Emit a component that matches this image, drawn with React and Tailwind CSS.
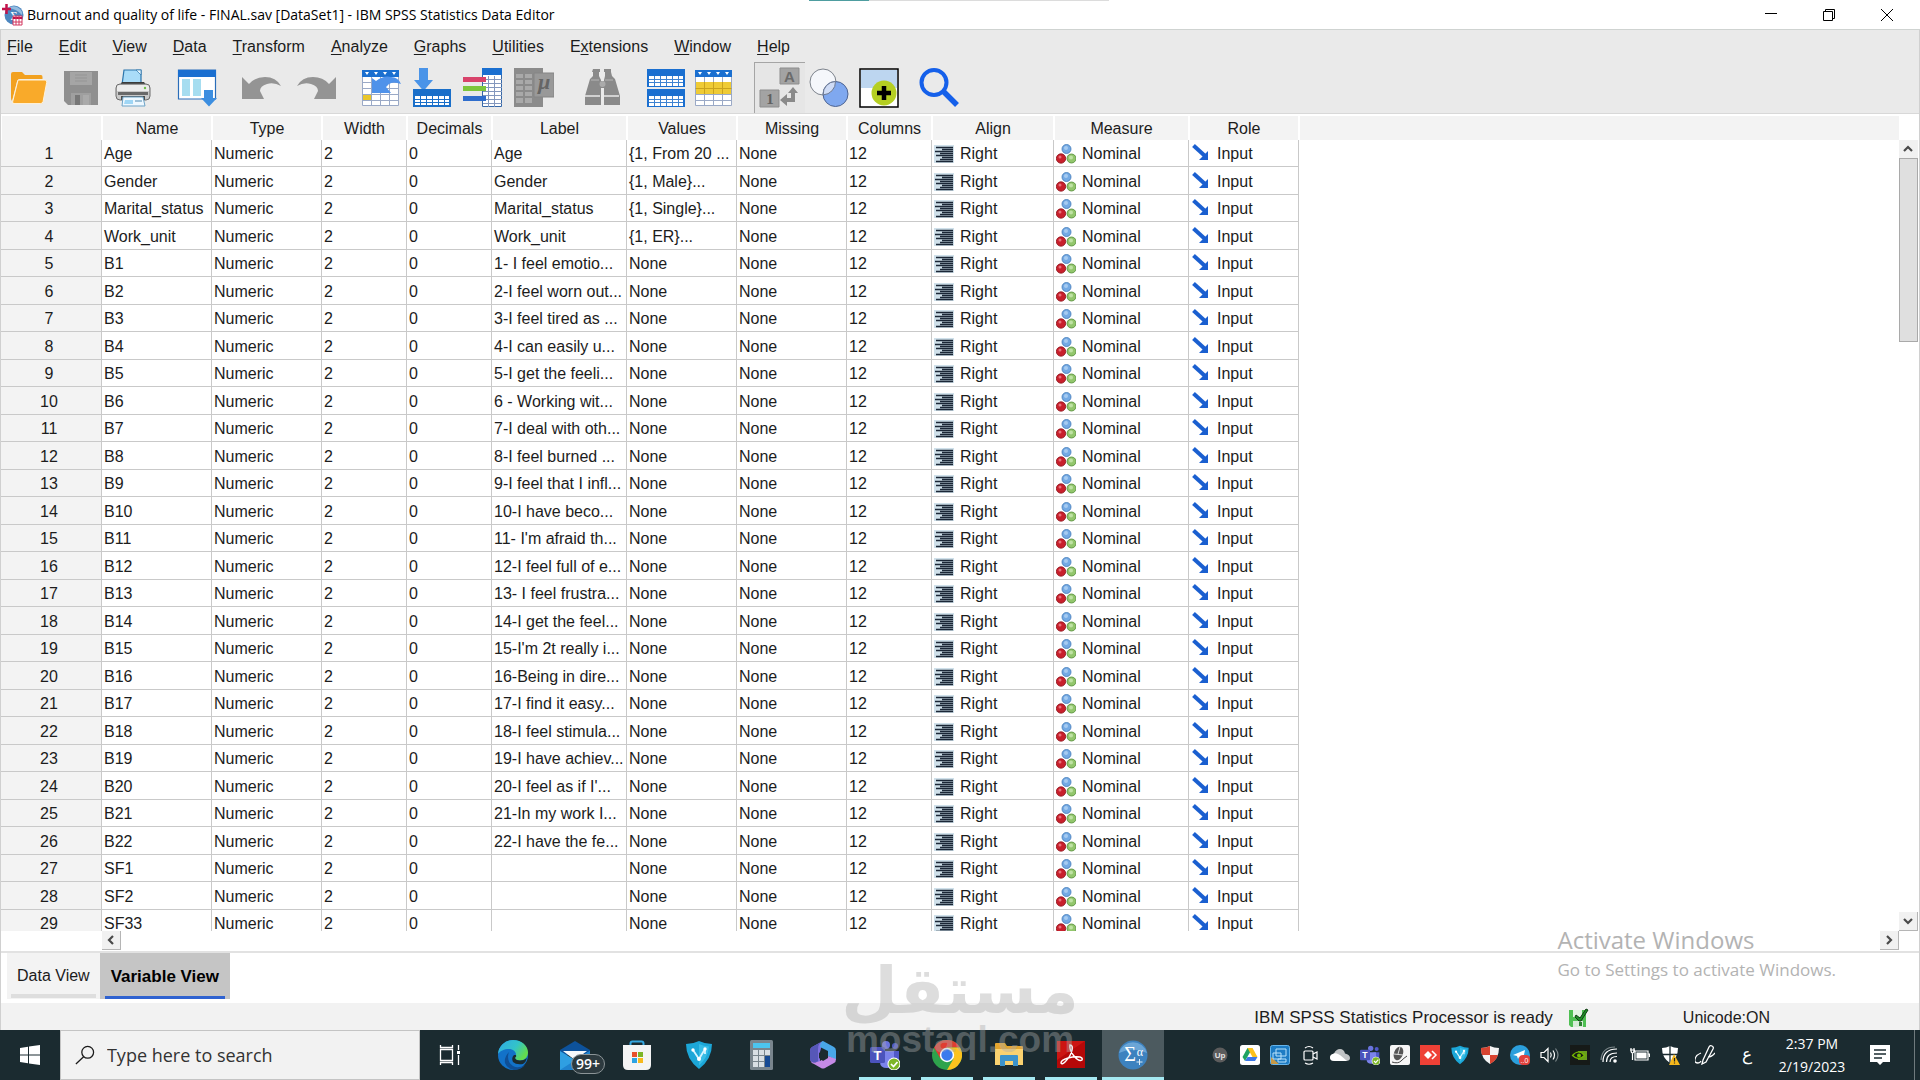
import React, { useState } from 'react';

const MENUS = [
  ['', 'F', 'ile'],
  ['', 'E', 'dit'],
  ['', 'V', 'iew'],
  ['', 'D', 'ata'],
  ['', 'T', 'ransform'],
  ['', 'A', 'nalyze'],
  ['', 'G', 'raphs'],
  ['', 'U', 'tilities'],
  ['E', 'x', 'tensions'],
  ['', 'W', 'indow'],
  ['', 'H', 'elp'],
];

const COLUMNS = [
  { label: '', width: 'w-[101px]' },
  { label: 'Name', width: 'w-[110px]' },
  { label: 'Type', width: 'w-[110px]' },
  { label: 'Width', width: 'w-[85px]' },
  { label: 'Decimals', width: 'w-[85px]' },
  { label: 'Label', width: 'w-[135px]' },
  { label: 'Values', width: 'w-[110px]' },
  { label: 'Missing', width: 'w-[110px]' },
  { label: 'Columns', width: 'w-[85px]' },
  { label: 'Align', width: 'w-[122px]' },
  { label: 'Measure', width: 'w-[135px]' },
  { label: 'Role', width: 'w-[110px]' },
];

const VARIABLES = [
  { name: 'Age', label: 'Age', values: '{1, From 20 ...' },
  { name: 'Gender', label: 'Gender', values: '{1, Male}...' },
  { name: 'Marital_status', label: 'Marital_status', values: '{1, Single}...' },
  { name: 'Work_unit', label: 'Work_unit', values: '{1, ER}...' },
  { name: 'B1', label: '1- I feel emotio...' },
  { name: 'B2', label: '2-I feel worn out...' },
  { name: 'B3', label: '3-I feel tired as ...' },
  { name: 'B4', label: '4-I can easily u...' },
  { name: 'B5', label: '5-I get the feeli...' },
  { name: 'B6', label: '6 - Working wit...' },
  { name: 'B7', label: '7-I deal with oth...' },
  { name: 'B8', label: '8-I feel burned ...' },
  { name: 'B9', label: '9-I feel that I infl...' },
  { name: 'B10', label: '10-I have beco...' },
  { name: 'B11', label: "11- I'm afraid th..." },
  { name: 'B12', label: '12-I feel full of e...' },
  { name: 'B13', label: '13- I feel frustra...' },
  { name: 'B14', label: '14-I get the feel...' },
  { name: 'B15', label: "15-I'm 2t really i..." },
  { name: 'B16', label: '16-Being in dire...' },
  { name: 'B17', label: '17-I find it easy...' },
  { name: 'B18', label: '18-I feel stimula...' },
  { name: 'B19', label: '19-I have achiev...' },
  { name: 'B20', label: "20-I feel as if I'..." },
  { name: 'B21', label: '21-In my work I...' },
  { name: 'B22', label: '22-I have the fe...' },
  { name: 'SF1', label: '' },
  { name: 'SF2', label: '' },
  { name: 'SF33', label: '' },
];

/* ---------- toolbar icons, all on a 40x40 box ---------- */

const OpenIcon = () => (
  <svg viewBox="0 0 40 40" className="w-10 h-10">
    <path d="M2 6q0-2 2-2h9l3 3h16q1.500 0 1.500 2v2H11q-2.500 0-3 2.500L3 33q-1-1-1-3z" fill="#f2a11f" />
    <path d="M9 12h27q2.200 0 1.700 2.400l-3.600 19q-.5 2.200-2.700 2.200H5q-1.800 0-1.300-2z" fill="#f9aa2a" stroke="#fff3dc" strokeWidth="1" />
  </svg>
);

const SaveIcon = () => (
  <svg viewBox="0 0 40 40" className="w-10 h-10">
    <path d="M3 3h34v34H7l-4-4z" fill="#8f8f8f" />
    <path d="M9 4h22v13H9z" fill="#a5a5a5" />
    <path d="M14 7h12M14 10h12M14 13h12" stroke="#959595" />
    <path d="M10 25h20v12H10z" fill="#9f9f9f" />
    <path d="M14 27h5v10h-5z" fill="#777" />
    <path d="M22 27h6v10h-6z" fill="#aaa" />
  </svg>
);

const PrintIcon = () => (
  <svg viewBox="0 0 40 40" className="w-10 h-10">
    <path d="M11 2h17v15H9z" fill="#a9dcf8" stroke="#2b75ac" strokeWidth="1.200" />
    <path d="M23 2h5v5z" fill="#e8f7ff" stroke="#2b75ac" strokeWidth=".7" />
    <path d="M9 14h22l2 3H7z" fill="#3b3b3b" />
    <rect x="3" y="16" width="34" height="16" rx="4" fill="#c9c9c9" stroke="#6b6b6b" />
    <path d="M4 19q0-2 3-2h26q3 0 3 2v4H4z" fill="#ececec" />
    <path d="M5 24h30v3H5z" fill="#696969" />
    <circle cx="32" cy="20" r="1.200" fill="#6fbf4b" />
    <path d="M8 28h24v4H8z" fill="#4d4d4d" />
    <path d="M10 29h20l2 9H9z" fill="#eef8ff" stroke="#6ca3c7" />
    <path d="M12 32h8v4h-9z" fill="#9fd6f5" />
    <path d="M22 33h7" stroke="#4d88b0" />
  </svg>
);

const DialogIcon = () => (
  <svg viewBox="0 0 40 40" className="w-10 h-10">
    <path d="M1.500 2h37v29h-37z" fill="#fff" stroke="#2a6db9" strokeWidth="1.200" />
    <path d="M1 2h38v7H1z" fill="#1a6fd0" />
    <path d="M5 11h8v17H5zM16 11h8v17h-8z" fill="#a6ddf0" />
    <path d="M27 22h9v8h4l-8 8.500-8-8.500h3z" fill="#3c8ee0" />
  </svg>
);

const UndoIcon = ({ flip }) => (
  <svg viewBox="0 0 40 40" className={flip ? 'w-10 h-10 -scale-x-100' : 'w-10 h-10'}>
    <path d="M1 9l7 7q6-7 16-7 11 0 16 9-7-4-14-2-7 2-7 7l4 8H1z" fill="#949494" />
  </svg>
);

const GridBase = () => (
  <>
    <path d="M1.500 2.500h36v35h-36z" fill="#fff" stroke="#9aa9c6" />
    <path d="M1.500 14.500h36M1.500 20.500h36M1.500 26.500h36M1.500 32.500h36M10.500 8v30M19.500 8v30M28.500 8v30" stroke="#9aa9c6" />
    <path d="M1 2h37v7H1z" fill="#1a6fd0" />
    <path d="M4 4h4l-2 3zM13 4h4l-2 3zM22 4h4l-2 3zM31 4h4l-2 3z" fill="#fff" />
  </>
);

const GotoCaseIcon = () => (
  <svg viewBox="0 0 40 40" className="w-10 h-10">
    <GridBase />
    <path d="M2 27h8v5H2z" fill="#e9c62b" />
    <path d="M11 10l4 3q8-6 15-4 7 0 10 7-8-3-12 0l-3 3 5 6H11z" fill="#4f92ea" />
  </svg>
);

const GotoVariableIcon = () => (
  <svg viewBox="0 0 40 40" className="w-10 h-10">
    <path d="M7 0h9v12h5l-9.500 11L2 12h5z" fill="#4a94e8" />
    <path d="M1 21h38v18H1z" fill="#1a6fc9" />
    <g fill="#fff">
      <path d="M3 28h5v3H3zM9 28h5v3H9zM15 28h5v3h-5zM21 28h5v3h-5zM27 28h5v3h-5zM33 28h4v3h-4z" />
      <path d="M3 32h5v2H3zM9 32h5v2H9zM15 32h5v2h-5zM21 32h5v2h-5zM27 32h5v2h-5zM33 32h4v2h-4z" />
      <path d="M3 35h5v2H3zM9 35h5v2H9zM15 35h5v2h-5zM21 35h5v2h-5zM27 35h5v2h-5zM33 35h4v2h-4z" />
    </g>
  </svg>
);

const VariablesIcon = () => (
  <svg viewBox="0 0 40 40" className="w-10 h-10">
    <path d="M19.500 1.500h19v37h-19z" fill="#fff" stroke="#3668a8" />
    <path d="M20 11.500h19M20 15.500h19M20 19.500h19M20 23.500h19M20 27.500h19M20 31.500h19M20 35.500h19M25.500 8v31M31.500 8v31" stroke="#8397bd" />
    <path d="M19 0h20v7H19z" fill="#1a6fd0" />
    <path d="M0 9h23v5H0z" fill="#d8436b" />
    <path d="M0 18h23v5H0z" fill="#7cc63c" />
    <path d="M0 28h23v5H0z" fill="#2f6dcc" />
  </svg>
);

const StatsIcon = () => (
  <svg viewBox="0 0 40 40" className="w-10 h-10">
    <path d="M0 0h29v39H0z" fill="#8b8b8b" />
    <g fill="#a9a9a9">
      <path d="M2 6h7v4H2zM11 6h7v4h-7zM20 6h7v4h-7zM2 12h7v4H2zM11 12h7v4h-7z" />
      <path d="M2 18h7v4H2zM11 18h7v4h-7zM2 24h7v4H2zM11 24h7v4h-7zM2 30h7v5H2zM11 30h7v5h-7z" />
    </g>
    <path d="M20 5h20v24H20z" fill="#999" stroke="#858585" />
    <text x="30" y="21" textAnchor="middle" fontFamily="Liberation Serif" fontStyle="italic" fontWeight="bold" fontSize="22" fill="#656565">µ</text>
  </svg>
);

const FindIcon = () => (
  <svg viewBox="0 0 40 40" className="w-10 h-10" fill="#8a8a8a">
    <path d="M11 1h7v3h-1v4l2 4v25H3V28l5-17 3-3V4h-1z" />
    <path d="M22 1h7v3l1 4 3 3 5 17v9H22V12l1-4V4h-1z" />
    <path d="M17 13h7v7h-7z" />
    <path d="M3 28h15M22 28h15" stroke="#e9e9e9" strokeWidth="1.500" />
    <path d="M9 12h8M23 12h8" stroke="#b5b5b5" />
    <circle cx="20.500" cy="16" r="3" fill="#aaa" />
  </svg>
);

const SplitIcon = () => (
  <svg viewBox="0 0 40 40" className="w-10 h-10">
    <path d="M1 1h38v18H1zM1 21h38v18H1z" fill="#1a6fd0" />
    <path d="M3 8h34v10H3zM3 28h34v10H3z" fill="#fff" />
    <path d="M3 11.500h34M3 14.500h34M3 31.500h34M3 34.500h34M8.500 8v10M14.500 8v10M20.500 8v10M26.500 8v10M32.500 8v10M8.500 28v10M14.500 28v10M20.500 28v10M26.500 28v10M32.500 28v10" stroke="#3f83d1" />
  </svg>
);

const SelectCasesIcon = () => (
  <svg viewBox="0 0 40 40" className="w-10 h-10">
    <GridBase />
    <path d="M2 14h35v12H2z" fill="#efcb35" />
    <path d="M1.500 20.500h36M10.500 14v12M19.500 14v12M28.500 14v12" stroke="#c9a21c" />
  </svg>
);

const ValueLabelsIcon = () => (
  <svg viewBox="0 0 50 50" className="w-[50px] h-[50px]">
    <path d="M25 5h19v16H25zM5 27h19v17H5z" fill="#a3a3a3" stroke="#8d8d8d" />
    <text x="34.500" y="19" textAnchor="middle" fontFamily="Liberation Sans" fontWeight="bold" fontSize="15" fill="#6b6b6b">A</text>
    <text x="15" y="41" textAnchor="middle" fontFamily="Liberation Serif" fontWeight="bold" fontSize="15" fill="#606060">1</text>
    <path d="M38 24l5 6h-3v9h-8v4l-7-6 7-6v4h4v-5h-3z" fill="#8a8a8a" />
  </svg>
);

const SetsIcon = () => (
  <svg viewBox="0 0 40 40" className="w-10 h-10">
    <circle cx="14" cy="14" r="13" fill="#f5f7fb" stroke="#7d838c" />
    <circle cx="26.500" cy="26" r="12.500" fill="#7fa8ef" stroke="#4d6391" />
    <path d="M26.500 13.500a12.500 12.500 0 0 0-12.300 13.400A13 13 0 0 0 26.500 13.500z" fill="#cfdcf6" stroke="#6a7790" />
  </svg>
);

const AddIcon = () => (
  <svg viewBox="0 0 40 40" className="w-10 h-10">
    <path d="M1 1h38v38H1z" fill="#fff" stroke="#000" strokeWidth="1.500" />
    <path d="M2 2h36v18H2z" fill="#bdd6f0" />
    <circle cx="25" cy="25" r="12.500" fill="#b5cf22" />
    <path d="M25 18v14M18 25h14" stroke="#000" strokeWidth="4.500" />
  </svg>
);

const SearchIcon = () => (
  <svg viewBox="0 0 40 40" className="w-10 h-10" fill="none" stroke="#1560ea">
    <circle cx="15" cy="14.500" r="12.500" strokeWidth="4" />
    <path d="M24 23l14 14" strokeWidth="5.500" />
  </svg>
);

const TOOL_GROUPS = [
  { className: 'gap-3', items: [['Open', OpenIcon], ['Save', SaveIcon], ['Print', PrintIcon]] },
  { className: 'ml-6', items: [['Recall dialogs', DialogIcon]] },
  { className: 'ml-6 gap-4', items: [['Undo', UndoIcon], ['Redo', () => <UndoIcon flip />]] },
  { className: 'ml-6 gap-[11px]', items: [['Go to case', GotoCaseIcon], ['Go to variable', GotoVariableIcon], ['Variables', VariablesIcon], ['Descriptives', StatsIcon]] },
  { className: 'ml-7', items: [['Find', FindIcon]] },
  { className: 'ml-6 gap-2', items: [['Split file', SplitIcon], ['Select cases', SelectCasesIcon]] },
];

/* ---------- cell icons ---------- */

const AlignIcon = () => (
  <svg viewBox="0 0 20 20" className="w-5 h-5 shrink-0">
    <path d="M0 1h20v18H0z" fill="#cfe0ea" />
    <path d="M2 3.500h17M8 5.500h11M1 7.500h18M6 9.500h13M2 11.500h17M8 13.500h11M6 15.500h13M2 17.500h17" stroke="#1b2737" strokeWidth="1.400" />
  </svg>
);

const NominalIcon = () => (
  <svg viewBox="0 0 20 20" className="w-5 h-5 shrink-0">
    <circle cx="10.500" cy="5" r="4.500" fill="#74aae4" stroke="#3f78b8" strokeWidth=".8" />
    <circle cx="10" cy="4" r="2" fill="#a6cbf1" />
    <circle cx="5" cy="14.500" r="4.700" fill="#c8202c" stroke="#8d1019" strokeWidth=".8" />
    <circle cx="4" cy="13" r="1.500" fill="#e8707a" />
    <circle cx="15.500" cy="14.500" r="4.500" fill="#92c66c" stroke="#4f8a33" strokeWidth=".8" />
    <circle cx="15" cy="13.500" r="2" fill="#bfe2a4" />
  </svg>
);

const InputIcon = () => (
  <svg viewBox="0 0 20 20" className="w-5 h-5 shrink-0">
    <path d="M2.500 1.500L14 12" stroke="#1a5fd0" strokeWidth="4" />
    <path d="M17 7v9H8z" fill="#1a5fd0" />
  </svg>
);

const Chevron = ({ d }) => (
  <svg viewBox="0 0 18 18" className="w-[18px] h-[18px]" fill="none" stroke="#4a4a4a" strokeWidth="2.200">
    <path d={d} />
  </svg>
);

/* ---------- taskbar icons, 30x30 ---------- */

const TaskViewIcon = () => (
  <svg viewBox="0 0 30 30" className="w-[30px] h-[30px]" fill="none" stroke="#fff" strokeWidth="1.300">
    <path d="M4.500 9.500h12v11h-12zM4.500 5v2.500h12V5M4.500 25v-2.500h12V25M22.500 5v5M22.500 15v10" />
    <path d="M21 11h3v3h-3z" fill="#fff" stroke="none" />
  </svg>
);

const EdgeIcon = () => (
  <svg viewBox="0 0 30 30" className="w-[30px] h-[30px]">
    <defs>
      <linearGradient id="edgeTop" x1="0" y1="0" x2="1" y2=".5">
        <stop offset="0" stopColor="#2fa9e6" />
        <stop offset=".6" stopColor="#33c3c9" />
        <stop offset="1" stopColor="#63dc4e" />
      </linearGradient>
    </defs>
    <circle cx="15" cy="15" r="15" fill="#1272c9" />
    <path d="M0 14A15 15 0 0 1 15 0c9 0 15 6 15 12.500 0 5-4 8-8 8-3 0-5-1-5-2.500 0-1 1-1.500 1-3.500 0-3-3-5.500-7-5.500-5 0-9 2-11 5z" fill="url(#edgeTop)" />
    <path d="M10 17q0 6 5 9t12-1q-4 5-11 5-7-1-9-7-1-6 4-11-1 2-1 5z" fill="#0f4f96" />
    <path d="M17 18q1 2.500 5 2.500 4 0 7-2.500-1 4-4 6-7 1-10-2-2-4 1-7h2q1 1-1 3z" fill="#1b2b30" />
  </svg>
);

const MailIcon = () => (
  <span className="relative block w-[30px] h-[30px]">
    <svg viewBox="0 0 30 30" className="w-[30px] h-[30px]">
      <path d="M0 10L15 1l15 9v5H0z" fill="#0d529b" />
      <path d="M3 11h24l-12 9z" fill="#f5f8fb" />
      <path d="M0 11l15 9 15-9v19H0z" fill="#2f9fe2" />
      <path d="M0 30l17-11 13-8v19z" fill="#1f83cf" />
    </svg>
    <span className="absolute left-[11px] top-[14px] rounded-full border border-[#8b9497] bg-[#2d3a3f] px-1 text-[14px] leading-[18px] font-semibold text-white font-['Open_Sans',sans-serif]">99+</span>
  </span>
);

const StoreIcon = () => (
  <svg viewBox="0 0 30 30" className="w-[30px] h-[30px]">
    <path d="M8.500 7V3.500q0-2 2-2h9q2 0 2 2V7" fill="none" stroke="#35a7e0" strokeWidth="2" />
    <path d="M1 5h28v20q0 5-5 5H6q-5 0-5-5z" fill="#f4f4f4" />
    <path d="M10 12h5v5h-5z" fill="#e8502c" />
    <path d="M16 12h5v5h-5z" fill="#7cb527" />
    <path d="M10 18h5v5h-5z" fill="#2ba3e3" />
    <path d="M16 18h5v5h-5z" fill="#f7b91c" />
  </svg>
);

const VShieldIcon = ({ className = 'w-[30px] h-[30px]' }) => (
  <svg viewBox="0 0 30 30" className={className}>
    <path d="M15 1q6 3 13 3 0 15-13 25Q2 19 2 4q7 0 13-3z" fill="#1ca7d8" />
    <path d="M15 4q5 2 10 2.500-1 11-10 19z" fill="#38bde6" />
    <path d="M9 10l6 9 6-10M21 9v5" fill="none" stroke="#d5f4ff" strokeWidth="1.800" />
    <circle cx="9" cy="10" r="1.700" fill="#fff" />
    <circle cx="21" cy="9" r="1.700" fill="#fff" />
    <circle cx="15" cy="19" r="2" fill="#fff" />
  </svg>
);

const CalcIcon = () => (
  <svg viewBox="0 0 30 30" className="w-[30px] h-[30px]">
    <rect x="4" y="0" width="23" height="30" rx="1.500" fill="#79858d" />
    <path d="M7 3h17v5H7z" fill="#4cc5ee" />
    <path d="M7 10h5v5H7zM13 10h5v5h-5zM19 10h5v5h-5zM7 16h5v5H7zM13 16h5v5h-5zM7 22h5v5H7zM13 22h5v5h-5z" fill="#d9dfe4" />
    <path d="M19 16h5v11h-5z" fill="#164a94" />
  </svg>
);

const M365Icon = () => (
  <svg viewBox="0 0 30 30" className="w-[30px] h-[30px]">
    <path d="M15 1L4 7q-2 1-2 4v9l10 4V12z" fill="#7f6fe0" />
    <path d="M15 1l11 6q2 1 2 4v9l-8-4v-5l-8-4q0-5 3-6z" fill="#49a7e8" />
    <path d="M2 20q1 3 4 4l7 4q2 1 4 0l9-5q2-1 2-4l-8-3-8 5q-6 3-10-1z" fill="#c58ae6" />
    <path d="M2 11q0-3 2-4l8-4.500Q10 5 10 10v11q-5 4-8-1z" fill="#5657b8" />
    <path d="M15 10l5 3v5l-5 3-4-3v-5z" fill="#1b2b30" />
  </svg>
);

const TeamsIcon = ({ className = 'w-[30px] h-[30px]' }) => (
  <svg viewBox="0 0 30 30" className={className}>
    <circle cx="16" cy="5" r="4" fill="#6a74dd" />
    <circle cx="25" cy="6" r="3" fill="#5059c9" />
    <path d="M20 11h9v8q0 5-5 5h-4z" fill="#5059c9" />
    <path d="M10 11h14v11q0 6-7 6t-7-6z" fill="#7b83eb" />
    <rect x="0" y="7" width="15" height="16" rx="1.500" fill="#4b53bc" />
    <text x="7.500" y="20" textAnchor="middle" fontFamily="Liberation Sans" fontWeight="bold" fontSize="13" fill="#fff">T</text>
    <circle cx="24" cy="24" r="6.500" fill="#fff" />
    <circle cx="24" cy="24" r="5.500" fill="#7cb527" />
    <path d="M21 24l2.500 2.500L27.500 22" fill="none" stroke="#fff" strokeWidth="1.700" />
  </svg>
);

const ChromeIcon = () => (
  <svg viewBox="0 0 30 30" className="w-[30px] h-[30px]">
    <circle cx="15" cy="15" r="15" fill="#2ea34c" />
    <path d="M2 7.500A15 15 0 0 1 28 7.500H15L8.500 18.700z" fill="#e03d31" />
    <path d="M28 7.500A15 15 0 0 1 15 30l6.500-11.300L15 7.500z" fill="#fcc31e" />
    <circle cx="15" cy="15" r="7.200" fill="#fff" />
    <circle cx="15" cy="15" r="5.700" fill="#3a7bed" />
  </svg>
);

const ExplorerIcon = () => (
  <svg viewBox="0 0 30 30" className="w-[30px] h-[30px]">
    <path d="M1 4q0-1 1-1h9l2 3h15q1 0 1 1v17H1z" fill="#e3a52f" />
    <path d="M1 9h28v16H1z" fill="#fad270" />
    <path d="M6 26V16q0-1 1-1h16q1 0 1 1v10h-5v-5h-8v5z" fill="#3c93cb" />
  </svg>
);

const AcrobatIcon = () => (
  <svg viewBox="0 0 30 30" className="w-[30px] h-[30px]">
    <path d="M1 1h28v27H1z" fill="#b50808" />
    <path d="M1 1h28L1 20z" fill="#cc1512" />
    <path d="M14 5q3 0 2 5-1 6-7 12-3 3-4 1 0-3 7-5 7-2 12-1 3 1 2 3-3 2-8-4-5-6-4-11z" fill="none" stroke="#fff" strokeWidth="1.500" />
  </svg>
);

const SpssIcon = () => (
  <svg viewBox="0 0 30 30" className="w-[30px] h-[30px]">
    <circle cx="15" cy="15" r="14.500" fill="#3d82bf" />
    <path d="M1 13a14.500 14.500 0 0 1 28 0q-14-7-28 0z" fill="#6ba5d6" />
    <text x="12" y="21" textAnchor="middle" fontFamily="Liberation Serif" fontSize="20" fill="#fff">Σ</text>
    <text x="22" y="16" textAnchor="middle" fontFamily="Liberation Serif" fontSize="12" fill="#fff">α</text>
    <path d="M21.500 19v6M18.500 22h6" stroke="#dcecf8" />
  </svg>
);

const TASKS = [
  { name: 'Task view', Icon: TaskViewIcon },
  { name: 'Edge', Icon: EdgeIcon },
  { name: 'Mail', Icon: MailIcon },
  { name: 'Store', Icon: StoreIcon },
  { name: 'VPN', Icon: VShieldIcon },
  { name: 'Calculator', Icon: CalcIcon },
  { name: 'Office', Icon: M365Icon },
  { name: 'Teams', Icon: TeamsIcon, open: true },
  { name: 'Chrome', Icon: ChromeIcon, open: true },
  { name: 'File Explorer', Icon: ExplorerIcon, open: true },
  { name: 'Acrobat', Icon: AcrobatIcon, open: true },
  { name: 'SPSS Statistics', Icon: SpssIcon, active: true },
];

/* ---------- tray icons, 20x20 ---------- */

const Tray = ({ children, ...props }) => (
  <svg viewBox="0 0 20 20" className="w-5 h-5" fill="none" {...props}>{children}</svg>
);

const TRAY = [
  ['Upwork', () => (
    <Tray>
      <circle cx="10" cy="10" r="7.500" fill="#5c5c5c" />
      <text x="10" y="13" textAnchor="middle" fontFamily="Liberation Sans" fontWeight="bold" fontSize="8" fill="#e4e4e4">Up</text>
    </Tray>
  )],
  ['Drive', () => (
    <Tray>
      <rect width="20" height="20" rx="2.500" fill="#fff" />
      <path d="M7.500 3h5l-7.500 13-2.500-4z" fill="#1ea362" />
      <path d="M7.500 3h5l5 9h-5z" fill="#fbc11b" />
      <path d="M7.500 12h10l-2.500 4H5z" fill="#3b78e7" />
    </Tray>
  )],
  ['Display', () => (
    <Tray>
      <rect x=".5" y=".5" width="19" height="19" rx="2" fill="#1d7cc4" stroke="#67b5ea" />
      <path d="M1 12l8 7H1z" fill="#c89945" />
      <path d="M6 4h10v7H6zM3 8h8v6H3zM8 14h8v3H8z" stroke="#b9e2fb" />
    </Tray>
  )],
  ['Meet now', () => (
    <Tray stroke="#fff" strokeWidth="1.200">
      <rect x="4" y="6" width="9" height="9" rx="1" />
      <path d="M13 9l4-2v7l-4-2M5 3q4-3 8 0M5 18q4 2.500 8 0" />
    </Tray>
  )],
  ['OneDrive', () => (
    <Tray>
      <path d="M5 16q-5 0-5-3.500 0-3 4-4 2-4.500 6-4.500t5 4.500q5 1 5 4.500 0 3-4 3z" fill="#c0c3c5" />
      <path d="M0 12.500q0-3 4-4 3-1 9 4l4 3.500H5q-5 0-5-3.500z" fill="#fff" />
    </Tray>
  )],
  ['Teams status', () => <TeamsIcon className="w-5 h-5" />],
  ['Mouse', () => (
    <Tray>
      <rect width="20" height="20" rx="2" fill="#f6f6f6" />
      <ellipse cx="8.500" cy="8.500" rx="4.500" ry="7" transform="rotate(20 8.500 8.500)" fill="#555" />
      <path d="M10 2L8 9M4 9l9 1" stroke="#ddd" />
      <path d="M2 17q6 2 9-1t6-5" stroke="#444" />
    </Tray>
  )],
  ['AnyDesk', () => (
    <Tray>
      <path d="M0 0h20v20H0z" fill="#ee4136" />
      <path d="M8 6l4 4-4 4-4-4z" fill="#fff" />
      <path d="M12 6l4 4-4 4" stroke="#fff" strokeWidth="1.500" />
    </Tray>
  )],
  ['VPN status', () => <VShieldIcon className="w-5 h-5" />],
  ['Antivirus', () => (
    <Tray>
      <path d="M10 1q4 2 9 2 0 11-9 16Q1 14 1 3q5 0 9-2z" fill="#f3f3f3" />
      <path d="M10 1v9H2Q1 7 1 3q5 0 9-2zM10 10h8q-2 6-8 9z" fill="#d8432f" />
    </Tray>
  )],
  ['Telegram', () => (
    <Tray>
      <circle cx="10" cy="10" r="10" fill="#2b9fdc" />
      <path d="M3 10l12-5-2 10-4-3-1 2-1-3z" fill="#fff" />
      <rect x="9" y="10" width="11" height="10" rx="4" fill="#e2423d" />
      <text x="14.500" y="18" textAnchor="middle" fontFamily="Liberation Sans" fontSize="7" fill="#fff">..0</text>
    </Tray>
  )],
  ['Volume', () => (
    <Tray stroke="#fff" strokeWidth="1.200">
      <path d="M1 7.500h3l4-4v13l-4-4H1zM10.500 7.500q1.500 2.500 0 5M13 5.500q3 4.500 0 9" />
      <path d="M15.500 3.500q5 6.500 0 13" stroke="#7c878a" />
    </Tray>
  )],
  ['NVIDIA', () => (
    <Tray>
      <path d="M0 0h20v20H0z" fill="#161a18" />
      <path d="M8 6h9v9H8z" fill="#6a9f1c" />
      <path d="M2.500 10.500q6-7 12 0-6 6-12 0z" stroke="#76b900" strokeWidth="1.200" fill="#161a18" />
      <circle cx="9" cy="10.500" r="2" fill="#76b900" />
    </Tray>
  )],
  ['Network', () => (
    <Tray stroke="#fff" strokeWidth="1.200">
      <path d="M3 17Q3 4 17 4M6.500 17q0-9 10.500-9M10 17q0-5.500 7-5.500" />
      <path d="M1 15Q2 2 15 2" stroke="#7c878a" />
      <circle cx="15" cy="16" r="1.800" fill="#fff" stroke="none" />
    </Tray>
  )],
  ['Battery', () => (
    <Tray stroke="#fff" strokeWidth="1.200">
      <path d="M5 6h13v9H5zM18.500 9h1v3M0 5h5M1 3v2M4 3v2M1 5q0 3 1.500 3T4 5M2.500 8v7" />
      <path d="M7 8h9v5H7z" fill="#fff" />
    </Tray>
  )],
  ['Security', () => (
    <Tray>
      <path d="M10 1q4 2 8 2 0 10-8 15Q2 13 2 3q4 0 8-2z" fill="#fff" />
      <path d="M10 1v17M2 9.500h16" stroke="#1b2b30" strokeWidth="1.300" />
      <path d="M14 9l6 11H9z" fill="#f4b71c" />
      <path d="M14.500 13v3.500M14.500 17.500v1" stroke="#222" strokeWidth="1.200" />
    </Tray>
  )],
];

function TitleBar() {
  return (
    <header className="relative flex h-[30px] items-center border-b border-[#cfd3d1] bg-white font-['Open_Sans',sans-serif]">
      <div className="absolute left-[809px] top-0 flex h-px">
        <span className="w-[60px] bg-[#4e9da0]" />
        <span className="w-60 bg-[#dcdcdc]" />
      </div>
      <svg viewBox="0 0 22 22" className="ml-0.5 w-[22px] h-[22px]">
        <circle cx="12" cy="11" r="9.500" fill="#4c86bf" />
        <path d="M6 4q7-4 12 1 3 3 2 6-5-6-14-7z" fill="#94bce0" />
        <text x="12" y="16" textAnchor="middle" fontFamily="Liberation Serif" fontSize="12" fill="#fff">Σ</text>
        <path d="M4.500 0v10M0 5h9" stroke="#c2134a" strokeWidth="2.500" />
        <path d="M11 12h9v9h-9z" fill="#fff" stroke="#d2375e" />
        <path d="M11 13h9v2h-9z" fill="#c2134a" />
        <path d="M11 18h9M14 12v9M17 12v9" stroke="#d2375e" />
      </svg>
      <h1 className="ml-[3px] text-[14px] text-black">Burnout and quality of life - FINAL.sav [DataSet1] - IBM SPSS Statistics Data Editor</h1>
      <div className="ml-auto flex h-full">
        <button aria-label="Minimize" className="flex w-[58px] items-center justify-center">
          <svg viewBox="0 0 12 12" className="w-3 h-3" stroke="#000"><path d="M0 4.500h12" /></svg>
        </button>
        <button aria-label="Restore" className="flex w-[58px] items-center justify-center">
          <svg viewBox="0 0 12 12" className="w-3 h-3" fill="none" stroke="#000"><path d="M.5 2.500h9v9h-9zM2.500 2.500v-2h9v9h-2" /></svg>
        </button>
        <button aria-label="Close" className="mr-1 flex w-[58px] items-center justify-center">
          <svg viewBox="0 0 12 12" className="w-3 h-3" stroke="#000"><path d="M0 0l12 12M12 0L0 12" /></svg>
        </button>
      </div>
    </header>
  );
}

function MenuBar() {
  return (
    <nav className="flex h-8 items-center gap-[26px] pl-1.5 pt-px">
      {MENUS.map(([pre, key, post]) => (
        <button key={pre + key + post} className="text-[16px]">
          {pre}<span className="underline underline-offset-2">{key}</span>{post}
        </button>
      ))}
    </nav>
  );
}

function Toolbar() {
  return (
    <div className="flex h-[52px] items-center border-b border-[#d8d8d8] pl-2">
      {TOOL_GROUPS.map((group, i) => (
        <div key={i} className={`flex ${group.className}`}>
          {group.items.map(([name, Icon]) => (
            <button key={name} aria-label={name}><Icon /></button>
          ))}
        </div>
      ))}
      <button aria-label="Value labels" aria-pressed="true" className="ml-5 border-l border-t border-[#a5a5a5] bg-[#e6e6e6]"><ValueLabelsIcon /></button>
      <div className="ml-1 flex gap-2.5">
        <button aria-label="Use variable sets"><SetsIcon /></button>
        <button aria-label="Show all variables"><AddIcon /></button>
      </div>
      <button aria-label="Search" className="ml-5"><SearchIcon /></button>
    </div>
  );
}

const CELL = 'border-r border-b border-[#c9c9c9] p-0 pl-0.5 pt-0.5 whitespace-nowrap overflow-hidden';

function IconCell({ icon, text }) {
  return (
    <td className={CELL}>
      <div className="flex items-center gap-1.5">{icon}{text}</div>
    </td>
  );
}

function VariableGrid() {
  return (
    <table className="w-full table-fixed border-separate border-spacing-0 text-left text-[16px] leading-5 text-[#1c1c1c]">
      <thead>
        <tr className="h-[26px]">
          {COLUMNS.map(col => (
            <th key={col.label} className={`${col.width} border-x border-t-2 border-white bg-[#f3f3f3] p-0 pt-0.5 text-center font-normal`}>{col.label}</th>
          ))}
          <th className="border-l border-t-2 border-white bg-[#f3f3f3] p-0" />
        </tr>
      </thead>
      <tbody>
        {VARIABLES.map((v, i) => (
          <tr key={v.name} className="odd:h-[27px] even:h-7">
            <th className="border-r border-b border-[#c9c9c9] bg-[#f3f3f3] p-0 pr-1 pt-0.5 text-center font-normal">{i + 1}</th>
            <td className={CELL}>{v.name}</td>
            <td className={CELL}>Numeric</td>
            <td className={CELL}>2</td>
            <td className={CELL}>0</td>
            <td className={CELL}>{v.label}</td>
            <td className={CELL}>{v.values || 'None'}</td>
            <td className={CELL}>None</td>
            <td className={CELL}>12</td>
            <IconCell icon={<AlignIcon />} text="Right" />
            <IconCell icon={<NominalIcon />} text="Nominal" />
            <IconCell icon={<InputIcon />} text="Input" />
            <td className="p-0" />
          </tr>
        ))}
      </tbody>
    </table>
  );
}

const SCROLL_BUTTON = 'border-r border-b border-[#b5b5b5] bg-[#f1f1f1]';

function ViewTabs() {
  const [view, setView] = useState('Variable View');
  return (
    <div role="tablist" className="flex h-[52px] items-start border-t-2 border-[#e2e2e2] bg-white pl-1.5">
      {['Data View', 'Variable View'].map(name => (
        <button key={name} role="tab" aria-selected={view === name} onClick={() => setView(name)}
          className={view === name
            ? 'flex h-[46px] flex-col bg-[#c5c5c5] px-[5px] text-[17px] font-bold text-black'
            : 'flex h-[46px] flex-col bg-[#f3f3f3] px-1 text-[16px]'}>
          <span className="flex flex-1 items-center px-1.5 pt-1">{name}</span>
          <span className={view === name ? 'h-[3px] w-full bg-[#2f62d0]' : 'mb-px h-1 w-full bg-[#dedede]'} />
        </button>
      ))}
    </div>
  );
}

function StatusBar() {
  return (
    <div className="flex h-[27px] items-center justify-end bg-[#f2f2f2] pr-[149px] pt-0.5 text-[#1c1c1c]">
      <span className="text-[17px]">IBM SPSS Statistics Processor is ready</span>
      <svg viewBox="0 0 20 20" className="ml-4 w-5 h-5">
        <path d="M0 2h17v17H2l-2-2z" fill="#4fc053" />
        <path d="M4 2h9v7H4z" fill="#e3f4e3" />
        <path d="M4 13h10v6H4z" fill="#d7ecd8" />
        <path d="M10 14h3v4h-3z" fill="#2c7f30" />
        <path d="M7 7l4 3 6-9 2 1-7 11h-2L6 9z" fill="#1e8f28" stroke="#123c14" />
      </svg>
      <span className="ml-[94px] text-[16px]">Unicode:ON</span>
    </div>
  );
}

function Taskbar() {
  return (
    <footer className="flex h-[50px] bg-[#1b2b30] font-['Open_Sans',sans-serif] text-white">
      <button aria-label="Start" className="flex w-[60px] items-center justify-center">
        <svg viewBox="0 0 20 20" className="w-5 h-5" fill="#fff">
          <path d="M0 3l8-1.200V9.500H0zM9 1.600L20 0v9.500H9zM0 10.500h8v7.700L0 17zM9 10.500h11V20L9 18.400z" />
        </svg>
      </button>
      <label className="flex w-[360px] items-center border border-[#c4c4c4] bg-[#f2f2f2] pl-3.5">
        <svg viewBox="0 0 22 22" className="w-[22px] h-[22px]" fill="none" stroke="#1a1a1a" strokeWidth="1.400">
          <circle cx="14" cy="8" r="6.500" />
          <path d="M9.500 13L1 21" />
        </svg>
        <input type="text" aria-label="Search" placeholder="Type here to search" className="ml-3 w-full bg-transparent text-[18px] outline-none placeholder:text-[#333]" />
      </label>
      <div className="flex">
        {TASKS.map(({ name, Icon, open, active }) => (
          <button key={name} aria-label={name} className={`relative flex w-[62px] items-center justify-center ${active ? 'bg-[#4c5a5f]' : ''}`}>
            <Icon />
            {open && <span className="absolute inset-x-[5px] bottom-0 h-[3px] bg-[#a5e9f2]" />}
            {active && <span className="absolute inset-x-0 bottom-0 h-[3px] bg-[#a5e9f2]" />}
          </button>
        ))}
      </div>
      <div className="ml-auto flex">
        {TRAY.map(([name, Icon]) => (
          <button key={name} aria-label={name} className="flex w-[30px] items-center justify-center"><Icon /></button>
        ))}
        <button aria-label="Pen" className="flex w-10 items-center justify-center">
          <Tray stroke="#fff" strokeWidth="1.300">
            <path d="M8 15L14 2q1-2 3-1t1 3l-7 13-4 2zM6 8q-5 2-6 6t3 4q2 0 3-2M13 12q4 0 7-4" />
          </Tray>
        </button>
        <button aria-label="Input language" className="flex w-11 items-center justify-center text-[17px] font-['DejaVu_Sans',sans-serif]">ع</button>
        <button className="flex w-[86px] flex-col items-center justify-center text-[14px] leading-[23px]">
          <span>2:37 PM</span>
          <span>2/19/2023</span>
        </button>
        <button aria-label="Notifications" className="mr-[9px] flex w-[50px] items-center justify-center">
          <svg viewBox="0 0 20 20" className="w-5 h-5">
            <path d="M0 0h20v17h-7l-3 3-3-3H0z" fill="#fff" />
            <path d="M4 5h12M4 9h12M4 13h8" stroke="#1b2b30" strokeWidth="1.300" />
          </svg>
        </button>
        <span className="w-1.5 border-l border-[#6f7a7d]" />
      </div>
    </footer>
  );
}

export default function App() {
  return (
    <div className="relative flex h-screen flex-col overflow-hidden bg-white font-['Liberation_Sans',Arial,sans-serif] text-[#1c1c1c]">
      <TitleBar />
      <div className="flex min-h-0 flex-1 flex-col border-x border-[#d0d0d0]">
        <div className="bg-[#eaeaea]">
          <MenuBar />
          <Toolbar />
        </div>

        <main className="flex min-h-0 flex-1">
          <div className="min-w-0 flex-1 overflow-hidden">
            <VariableGrid />
          </div>
          <div className="mr-px flex w-[19px] flex-col justify-between pt-[26px]">
            <div className="flex flex-col">
              <button aria-label="Scroll up" className="bg-[#f1f1f1]"><Chevron d="M5 11l4-4 4 4" /></button>
              <div className="h-[184px] border border-[#a9a9a9] bg-[#dfdfdf]" />
            </div>
            <button aria-label="Scroll down" className={SCROLL_BUTTON}><Chevron d="M5 7l4 4 4-4" /></button>
          </div>
        </main>
        <div className="flex h-5 items-start justify-between pl-[101px] pr-5">
          <button aria-label="Scroll left" className={SCROLL_BUTTON}><Chevron d="M11 5L7 9l4 4" /></button>
          <button aria-label="Scroll right" className={SCROLL_BUTTON}><Chevron d="M7 5l4 4-4 4" /></button>
        </div>

        <ViewTabs />
        <StatusBar />
      </div>
      <Taskbar />

      {/* Activation notice */}
      <div className="pointer-events-none absolute bottom-24 right-[84px] font-['Open_Sans',sans-serif] text-[#b3b3b3]">
        <p className="text-[24px] leading-8">Activate Windows</p>
        <p className="text-[17px] leading-7">Go to Settings to activate Windows.</p>
      </div>

      {/* Watermark */}
      <div className="pointer-events-none absolute bottom-5 left-1/2 flex -translate-x-1/2 flex-col items-center font-bold text-[#ababab] opacity-40">
        <span lang="ar" className="text-[65px] leading-[58px] font-['DejaVu_Sans',sans-serif]">مستقل</span>
        <span className="text-[37px] leading-10">mostaql.com</span>
      </div>
    </div>
  );
}
